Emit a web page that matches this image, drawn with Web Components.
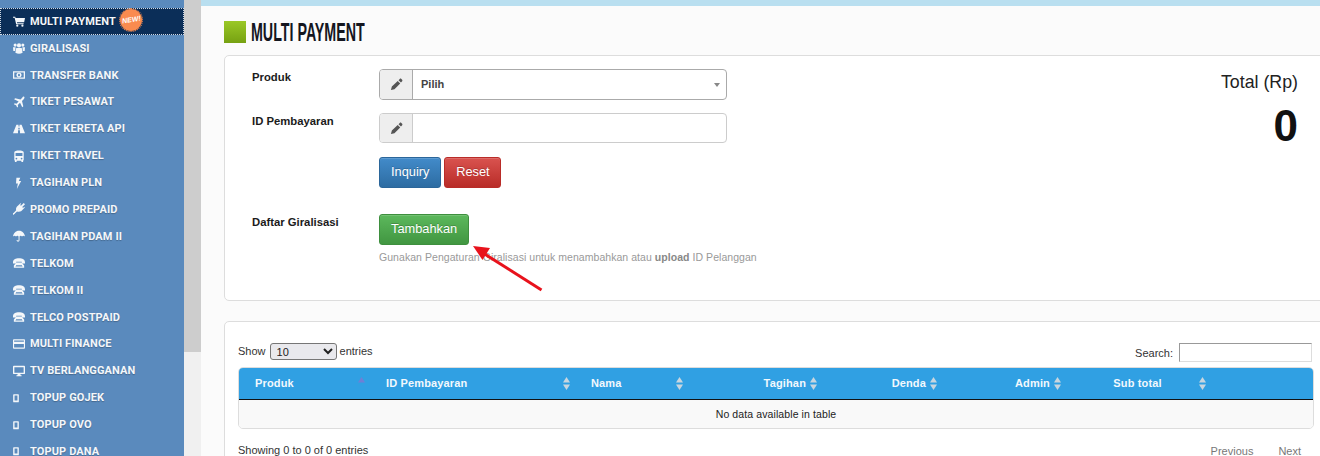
<!DOCTYPE html>
<html>
<head>
<meta charset="utf-8">
<title>Multi Payment</title>
<style>
  html, body { margin: 0; height: 456px; overflow: hidden; background: #fbfbfb; }
  body { font-family: "Liberation Sans", Arial, sans-serif; font-size: 11px; color: #222; }
</style>
</head>
<body>
<app-shell>
  <side-bar slot="side">
    <side-item icon="cart" active badge>MULTI PAYMENT</side-item>
    <side-item icon="group">GIRALISASI</side-item>
    <side-item icon="money">TRANSFER BANK</side-item>
    <side-item icon="plane">TIKET PESAWAT</side-item>
    <side-item icon="road">TIKET KERETA API</side-item>
    <side-item icon="bus">TIKET TRAVEL</side-item>
    <side-item icon="bolt">TAGIHAN PLN</side-item>
    <side-item icon="plug">PROMO PREPAID</side-item>
    <side-item icon="umbrella">TAGIHAN PDAM II</side-item>
    <side-item icon="phone">TELKOM</side-item>
    <side-item icon="phone">TELKOM II</side-item>
    <side-item icon="phone">TELCO POSTPAID</side-item>
    <side-item icon="card">MULTI FINANCE</side-item>
    <side-item icon="desktop">TV BERLANGGANAN</side-item>
    <side-item icon="mobile">TOPUP GOJEK</side-item>
    <side-item icon="mobile">TOPUP OVO</side-item>
    <side-item icon="mobile">TOPUP DANA</side-item>
  </side-bar>
  <page-title>MULTI PAYMENT</page-title>
  <payment-form></payment-form>
  <data-table></data-table>
</app-shell>

<script>
  // ikon kecil, semua viewBox 14x14
  const ICONS = {
    cart: '<path d="M0 2h2.6l.4 1.4h11l-1 5.1H4.6l.3 1.1H12.400v1.100H3.700L1.900 3.100H0z"/><circle cx="5" cy="12.500" r="1.300"/><circle cx="11" cy="12.500" r="1.300"/>',
    group: '<circle cx="7" cy="4" r="2.400"/><circle cx="2.500" cy="3.600" r="1.800"/><circle cx="11.500" cy="3.600" r="1.800"/><path d="M3.800 7h6.400l1 5.500a9 9 0 0 1-8.400 0z"/><path d="M0 6h3l-.500 4.500H.4zM11 6h3l-.4 4.500h-2.100z"/>',
    money: '<path fill-rule="evenodd" d="M0 2.500h14v9H0zM1.500 4v6h11V4z"/><path fill-rule="evenodd" d="M7 4.200c1.700 0 3 1.200 3 2.800S8.700 9.800 7 9.800 4 8.600 4 7s1.300-2.800 3-2.800zM7 5.500c-.7 0-1.200.7-1.200 1.500S6.300 8.500 7 8.500 8.200 7.800 8.200 7 7.700 5.500 7 5.500z"/>',
    plane: '<path d="M13 1c.8.8.3 2-.5 2.800L10.500 5.700 12 12l-1.200 1.200-2.600-5.300-2.600 2.600.3 2-1 1-1.300-2.600L1 9.600l1-1 2 .3 2.600-2.600L1.300 3.700 2.500 2.500l6.300 1.500 1.900-2C11.500 1.200 12.200.2 13 1z"/>',
    road: '<path d="M4 2h2.400v2.200h1.200V2H10l4 10H8.200V8.500H5.800V12H0zM6.200 5.500v2h1.600v-2z" fill-rule="evenodd"/>',
    bus: '<path fill-rule="evenodd" d="M1.500 2.500C1.500 1 4 .5 7 .5s5.500.5 5.500 2v9c0 .5-.3.8-.7.9V14h-2v-1.500H4.200V14h-2v-1.600c-.4-.1-.7-.4-.7-.9zM3 3.500V7h8V3.500zM4 9a1 1 0 1 0 0 2 1 1 0 0 0 0-2zM10 9a1 1 0 1 0 0 2 1 1 0 0 0 0-2z"/>',
    bolt: '<path d="M4 1h4.500L6.800 4.800H9.500L4.500 14l1.200-6.500H3.500z"/>',
    plug: '<path d="M14 1.500 10.800 4.700l1 1L13 4.500l.8.800-2.600 2.700C10 10 7 11 4.700 9.800L2.500 12c-.5.500-1 1.500-2.500 2v-2c.8-.3 1.200-.8 1.500-1.200l2.200-2.200C3 6.500 4 3.800 6 2.800L8.700.2l.8.800-1.200 1.200 1 1L12.500.1z"/>',
    umbrella: '<path d="M7 1C3 1 .6 4 0 7.500c1-1 2.500-1 3.500 0 1-1 2.500-1 3 0v4.300c0 .8-1.300.8-1.300 0H4.200c0 2.400 3.400 2.400 3.400 0V7.500c.5-1 2-1 2.900 0 1-1 2.500-1 3.500 0C13.400 4 11 1 7 1z"/>',
    phone: '<path d="M0 6.500C0 3 3 1.500 7 1.500s7 1.500 7 5v1H10.200V5.500H3.800v2H0z"/><path fill-rule="evenodd" d="M4 6.500h6l3 3.500v2.500H1V10zM3.500 9.700v.8h7v-.8zM3 11.200v.6h8v-.6z"/>',
    card: '<path fill-rule="evenodd" d="M1 1.500h12a1 1 0 0 1 1 1v9a1 1 0 0 1-1 1H1a1 1 0 0 1-1-1v-9a1 1 0 0 1 1-1zM1.300 3v1.500h11.400V3zM1.300 7v4h11.400V7z"/>',
    desktop: '<path fill-rule="evenodd" d="M1 1h12a1 1 0 0 1 1 1v7.500a1 1 0 0 1-1 1H8.500l.5 1.500H10v1H4v-1h1l.5-1.500H1a1 1 0 0 1-1-1V2a1 1 0 0 1 1-1zM1.600 2.500v6.500h10.800V2.500z"/>',
    mobile: '<path fill-rule="evenodd" d="M1 2.500h5a.8.8 0 0 1 .8.800v8a.8.8 0 0 1-.8.800H1a.8.8 0 0 1-.8-.8v-8A.8.8 0 0 1 1 2.500zM1.800 4v5.800h3.400V4z"/>',
    pencil: '<path d="M10.500 1c.5-.5 1.300-.5 1.700 0l.9.900c.4.400.4 1.200 0 1.600L11.800 4.800 9.200 2.300zM8.300 3.100l2.700 2.700-6.200 6.200L1 13l1-3.800z"/>'
  };

  class AppShell extends HTMLElement {
    constructor() {
      super();
      this.attachShadow({ mode: 'open' }).innerHTML = `<style>
        :host { display: flex; height: 456px; overflow: hidden; position: relative; }
        .rail { width: 17px; flex: none; background: #f0f0f0; }
        .rail div { height: 352px; background: #cdcdcd; }
        main { flex: 1; min-width: 0; background: #fbfbfb; }
        .top { height: 6px; background: #b9dff0; }
        .body { padding: 15px 0 0 23px; display: flex; flex-direction: column; margin-right: -10px; }
        .arrow { position: absolute; left: 465px; top: 240px; }
      </style>
      <slot name="side"></slot>
      <div class="rail"><div></div></div>
      <main><div class="top"></div><div class="body"><slot></slot></div></main>
      <svg class="arrow" width="85" height="56" viewBox="0 0 85 56">
        <path d="M76.500 50 18 13" stroke="#e8121c" stroke-width="3" fill="none"/>
        <path d="M8 6 25 8 17.500 20z" fill="#e8121c"/>
      </svg>`;
    }
  }

  class SideBar extends HTMLElement {
    constructor() {
      super();
      this.attachShadow({ mode: 'open' }).innerHTML = `<style>
        :host { display: block; width: 184px; flex: none; background: #5a8abd; padding-top: 7.800px; box-sizing: border-box; overflow: hidden; }
      </style><slot></slot>`;
    }
  }

  class SideItem extends HTMLElement {
    connectedCallback() {
      if (this.shadowRoot) return;
      const badge = this.hasAttribute('badge') ? '<span class="badge"><b>NEW!</b></span>' : '';
      this.attachShadow({ mode: 'open' }).innerHTML = `<style>
        :host { display: flex; align-items: center; height: 26.900px; box-sizing: border-box; padding-left: 13px; position: relative;
          font: 700 11px Roboto, "Liberation Sans", sans-serif; letter-spacing: .12px; color: #f4f7fa; text-shadow: 0 1px 1px rgba(0,0,0,.25); white-space: nowrap; }
        :host([active]) { background: #0b2e58; outline: 1px dotted #cfd8e3; outline-offset: -1px; }
        svg { width: 12px; height: 12px; fill: #f4f7fa; flex: none; margin-right: 5px; }
        .badge { position: absolute; left: 120px; top: 1px; width: 22px; height: 22px; border-radius: 50%; background: #f98b4f;
          outline: 1px dotted #f98b4f; display: flex; align-items: center; justify-content: center; }
        .badge b { font: italic 700 7px "Liberation Sans", sans-serif; letter-spacing: 0; color: #fff; transform: rotate(-10deg); text-shadow: none; }
      </style><svg viewBox="0 0 14 14">${ICONS[this.getAttribute('icon')] || ''}</svg><slot></slot>${badge}`;
    }
  }

  class PageTitle extends HTMLElement {
    constructor() {
      super();
      this.attachShadow({ mode: 'open' }).innerHTML = `<style>
        :host { display: flex; align-items: center; height: 22px; margin-bottom: 12px; }
        i { width: 22px; height: 22px; background: linear-gradient(#9ac826, #76a112); flex: none; margin-right: 5px; }
        h1 { margin: 0; font: 700 25px/22px "Liberation Sans", sans-serif; color: #14161f; transform: scaleX(.57); transform-origin: left center; white-space: nowrap; }
      </style><i></i><h1><slot></slot></h1>`;
    }
  }

  class InputGroup extends HTMLElement {
    connectedCallback() {
      if (this.shadowRoot) return;
      const pick = this.getAttribute('value');
      this.attachShadow({ mode: 'open' }).innerHTML = `<style>
        :host { display: flex; width: 348px; box-sizing: border-box; height: ${pick ? 31 : 30}px; border: 1px solid ${pick ? '#aaa' : '#ccc'}; border-radius: 4px; background: #fff; position: relative; }
        .add { width: 32px; flex: none; background: #eee; border-right: 1px solid ${pick ? '#aaa' : '#ccc'}; border-radius: 3px 0 0 3px; display: flex; align-items: center; justify-content: center; }
        svg { width: 13px; height: 13px; fill: #555; }
        .val { padding-left: 8px; line-height: 28px; font-weight: 700; font-size: 11px; color: #444; }
        .car { position: absolute; right: 6px; top: 13px; border: 3px solid transparent; border-top: 4px solid #888; border-bottom: 0; }
      </style><div class="add"><svg viewBox="0 0 14 14">${ICONS.pencil}</svg></div>
      ${pick ? `<div class="val">${pick}</div><div class="car"></div>` : ''}`;
    }
  }

  class UiButton extends HTMLElement {
    connectedCallback() {
      if (this.shadowRoot) return;
      const c = { blue: ['#428bca', '#2d6ca2', '#2b669a'], red: ['#d9534f', '#b92c28', '#b92c28'], green: ['#5cb85c', '#419641', '#3e8f3e'] }[this.getAttribute('color')];
      this.attachShadow({ mode: 'open' }).innerHTML = `<style>
        :host { display: inline-block; box-sizing: border-box; height: 31px; padding: 0 11px; font-size: 12.800px; line-height: 28px; color: #fff; border: 1px solid ${c[2]}; border-radius: 3px;
          background: linear-gradient(${c[0]}, ${c[1]}); text-shadow: 0 -1px 0 rgba(0,0,0,.2); box-shadow: inset 0 1px 0 rgba(255,255,255,.15); }
      </style><slot></slot>`;
    }
  }

  class PaymentForm extends HTMLElement {
    constructor() {
      super();
      this.attachShadow({ mode: 'open' }).innerHTML = `<style>
        :host { display: flex; justify-content: space-between; height: 246px; box-sizing: border-box; padding: 13px 31px 0 27px; background: #fff; border: 1px solid #ddd; border-radius: 5px; }
        .form { display: grid; grid-template-columns: 127px 348px; align-content: start; }
        label { font-weight: 700; font-size: 11.300px; line-height: 16px; color: #1b1b1b; }
        .cell { margin-bottom: 13px; }
        .btns { display: flex; gap: 3px; margin-bottom: 26px; }
        .btns ui-button:last-child { width: 57px; padding: 0; text-align: center; }
        small { display: block; font-size: 10.500px; color: #999; margin-top: 6px; white-space: nowrap; letter-spacing: .05px; }
        small b { color: #888; }
        .total { text-align: right; margin-top: 2px; }
        .total div { font-size: 17.800px; line-height: 22px; color: #222; }
        .total strong { display: block; font-size: 44px; line-height: 52px; margin-top: 7px; color: #111; }
      </style>
      <div class="form">
        <label>Produk</label><div class="cell"><input-group value="Pilih"></input-group></div>
        <label>ID Pembayaran</label><div class="cell" style="margin-bottom:14px"><input-group></input-group></div>
        <span></span><div class="btns"><ui-button color="blue">Inquiry</ui-button><ui-button color="red">Reset</ui-button></div>
        <label>Daftar Giralisasi</label><div><ui-button color="green">Tambahkan</ui-button>
          <small>Gunakan Pengaturan Giralisasi untuk menambahkan atau <b>upload</b> ID Pelanggan</small></div>
      </div>
      <div class="total"><div>Total (Rp)</div><strong>0</strong></div>`;
    }
  }

  class SortHead extends HTMLElement {
    connectedCallback() {
      if (this.shadowRoot) return;
      const asc = this.hasAttribute('asc');
      this.attachShadow({ mode: 'open' }).innerHTML = `<style>
        :host { display: block; position: relative; height: 31px; line-height: 31px; box-sizing: border-box; font-weight: 700; font-size: 11px; letter-spacing: .15px; color: #f2f8fd; white-space: nowrap; }
        svg { position: absolute; right: 4px; top: 9px; }
      </style><slot></slot>
      <svg width="7" height="13" viewBox="0 0 7 13">
        <path d="M3.500 0 7 5.500H0z" fill="${asc ? '#6f7fd6' : '#c9d6df'}"/>
        ${asc ? '' : '<path d="M0 7.500h7L3.500 13z" fill="#c9d6df"/>'}
      </svg>`;
    }
  }

  class DataTable extends HTMLElement {
    constructor() {
      super();
      this.attachShadow({ mode: 'open' }).innerHTML = `<style>
        :host { display: block; height: 200px; margin-top: 20px; box-sizing: border-box; padding: 21px 0 0 13px; background: #fff; border: 1px solid #ddd; border-radius: 5px; }
        .tools, .foot { display: flex; justify-content: space-between; width: 1074px; color: #333; }
        .tools { height: 24px; align-items: flex-start; }
        .len { display: flex; align-items: center; gap: 3px; height: 16px; padding-bottom: 1px; }
        .srch { display: flex; align-items: center; gap: 6px; height: 19px; }
        select { width: 67px; height: 17px; margin-left: 1px; align-self: flex-start; font: 11px "Liberation Sans", sans-serif; padding: 0 0 0 2px; background: #e9e9ed; border: 1px solid #767676; border-radius: 3px; color: #222; }
        input { width: 133px; height: 19px; box-sizing: border-box; border: 1px solid; border-color: #999 #ddd #ddd #999; background: #fff; padding: 0; }
        .table { width: 1076px; box-sizing: border-box; border: 1px solid #ddd; border-radius: 5px; overflow: hidden; }
        .head { display: grid; grid-template-columns: 130px 205px 113px 134px 120px 124px 145px 1fr; background: #30a0e3; border-bottom: 1px solid #111; }
        .pl { padding-left: 17px; }
        .pl[asc] { padding-left: 16px; }
        .rt { text-align: right; }
        .none { height: 28px; line-height: 28px; text-align: center; background: #f9f9f9; color: #222; font-size: 10.500px; letter-spacing: .1px; }
        .foot { margin-top: 13px; width: 1063px; line-height: 16px; }
        .pg { display: flex; gap: 25px; color: #777; padding-top: 1px; }
      </style>
      <div class="tools">
        <div class="len">Show <select><option>10</option></select> entries</div>
        <div class="srch">Search: <input></div>
      </div>
      <div class="table">
        <div class="head">
          <sort-head class="pl" asc>Produk</sort-head>
          <sort-head class="pl">ID Pembayaran</sort-head>
          <sort-head class="pl">Nama</sort-head>
          <sort-head class="rt" style="padding-right:15px">Tagihan</sort-head>
          <sort-head class="rt" style="padding-right:15px">Denda</sort-head>
          <sort-head class="rt" style="padding-right:15px">Admin</sort-head>
          <sort-head style="text-align:center">Sub total</sort-head>
          <span></span>
        </div>
        <div class="none">No data available in table</div>
      </div>
      <div class="foot"><span>Showing 0 to 0 of 0 entries</span><span class="pg"><span>Previous</span><span>Next</span></span></div>`;
    }
  }

  customElements.define('input-group', InputGroup);
  customElements.define('ui-button', UiButton);
  customElements.define('sort-head', SortHead);
  customElements.define('side-item', SideItem);
  customElements.define('side-bar', SideBar);
  customElements.define('page-title', PageTitle);
  customElements.define('payment-form', PaymentForm);
  customElements.define('data-table', DataTable);
  customElements.define('app-shell', AppShell);
</script>
</body>
</html>
